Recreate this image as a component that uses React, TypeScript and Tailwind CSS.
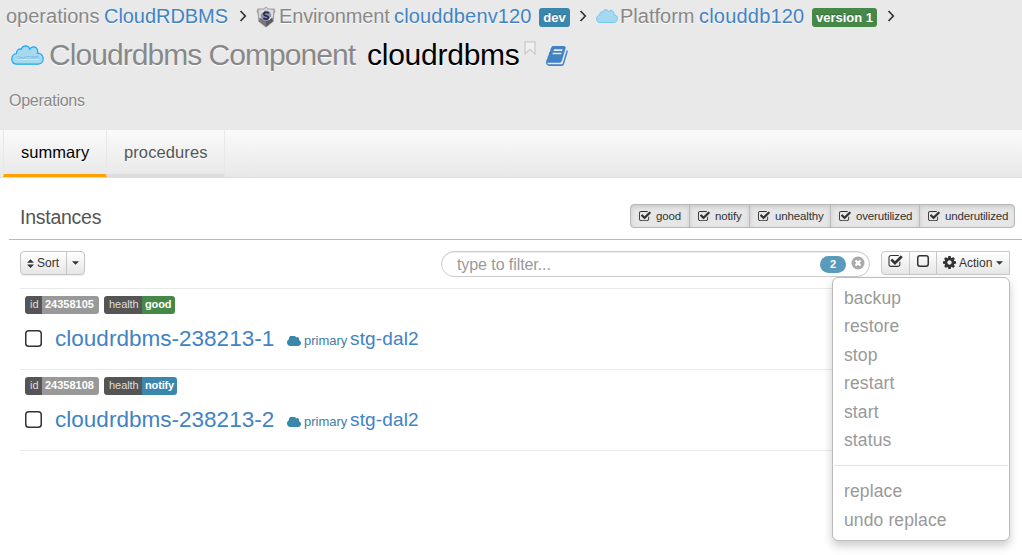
import React from "react";

type IconProps = { className?: string };

function CheckIcon({ className }: IconProps) {
  return (
    <svg viewBox="64 128 1664 1536" className={className} fill="currentColor">
      <path d="M1472 930v318q0 119-84.5 203.5t-203.5 84.5h-832q-119 0-203.5-84.5t-84.5-203.5v-832q0-119 84.5-203.5t203.5-84.5h832q63 0 117 25 15 7 18 23 3 17-9 29l-49 49q-10 10-23 10-3 0-9-2-23-6-45-6h-832q-66 0-113 47t-47 113v832q0 66 47 113t113 47h832q66 0 113-47t47-113v-254q0-13 9-22l64-64q10-10 23-10 6 0 12 3 20 8 20 29zm231-489l-814 814q-24 24-57 24t-57-24l-430-430q-24-24-24-57t24-57l110-110q24-24 57-24t57 24l263 263 647-647q24-24 57-24t57 24l110 110q24 24 24 57t-24 57z" />
    </svg>
  );
}

function CogIcon({ className }: IconProps) {
  return (
    <svg viewBox="128 128 1536 1536" className={className} fill="currentColor">
      <path d="M1152 896q0-106-75-181t-181-75-181 75-75 181 75 181 181 75 181-75 75-181zm512-109v222q0 12-8 23t-20 13l-185 28q-19 54-39 91 35 50 107 138 10 12 10 25t-9 23q-27 37-99 108t-94 71q-12 0-26-9l-138-108q-44 23-91 38-16 136-29 186-7 28-36 28h-222q-14 0-24.5-8.5t-11.5-21.5l-28-184q-49-16-90-37l-141 107q-10 9-25 9-14 0-25-11-126-114-165-168-7-10-7-23 0-12 8-23 15-21 51-66.5t54-70.5q-27-50-41-99l-183-27q-13-2-21-12.5t-8-23.5v-222q0-12 8-23t19-13l186-28q14-46 39-92-40-57-107-138-10-12-10-24 0-10 9-23 26-36 98.5-107.5t94.5-71.5q13 0 26 10l138 107q44-23 91-38 16-136 29-186 7-28 36-28h222q14 0 24.5 8.5t11.5 21.5l28 184q49 16 90 37l142-107q9-9 24-9 13 0 25 10 129 119 165 170 7 8 7 22 0 12-8 23-15 21-51 66.5t-54 70.5q26 50 41 98l183 28q13 2 21 12.5t8 23.5z" />
    </svg>
  );
}

function BookIcon({ className }: IconProps) {
  return (
    <svg viewBox="64 128 1680 1536" className={className} fill="currentColor">
      <path d="M1703 478q40 57 18 129l-275 906q-19 64-76.5 107.5t-122.5 43.5h-923q-77 0-148.5-53.5t-99.5-131.5q-24-67-2-127 0-4 3-27t4-37q1-8-3-21.5t-3-19.5q2-11 8-21t16.5-23.5 16.5-23.5q23-38 45-91.5t30-91.5q3-10 .5-30t-.5-28q3-11 17-28t17-23q21-36 42-92t25-90q1-9-2.5-32t.5-28q4-13 22-30.5t22-22.5q19-26 42.5-84.5t27.5-96.5q1-8-3-25.5t-2-26.5q2-8 9-18t18-23 17-21q8-12 16.5-30.5t15-35 16-36 19.5-32 26.5-23.5 36-11.5 47.5 5.5l-1 3q38-9 51-9h761q74 0 114 56t18 130l-274 906q-36 119-71.5 153.5t-128.5 34.5h-869q-27 0-38 15-11 16-1 43 24 70 144 70h923q29 0 56-15.5t35-41.5l300-987q7-22 5-57 38 15 59 43zm-1064 2q-4 13 2 22.5t20 9.5h608q13 0 25.5-9.5t16.5-22.5l21-64q4-13-2-22.5t-20-9.5h-608q-13 0-25.5 9.5t-16.5 22.5zm-83 256q-4 13 2 22.5t20 9.5h608q13 0 25.5-9.5t16.5-22.5l21-64q4-13-2-22.5t-20-9.5h-608q-13 0-25.5 9.5t-16.5 22.5z" />
    </svg>
  );
}

function SolidCloud({ className }: IconProps) {
  return (
    <svg viewBox="64 256 1920 1280" className={className} fill="currentColor" preserveAspectRatio="none">
      <path d="M1984 1152q0 159-112.5 271.5t-271.5 112.5h-1088q-185 0-316.5-131.5t-131.5-316.5q0-132 71-241.5t187-163.5q-2-28-2-43 0-212 150-362t362-150q158 0 286.5 88t187.5 230q70-62 166-62 106 0 181 75t75 181q0 75-41 138 129 30 213 134.5t84 239.5z" />
    </svg>
  );
}

function PlatformCloud({ className, label }: IconProps & { label?: boolean }) {
  return (
    <svg viewBox="0 0 33 20" className={className} preserveAspectRatio="none">
      <path
        d="M6 19.2C2.500 19.200.8 17 .8 14.200.8 11 3 8.800 5.600 8.500 5.100 5.500 8 3.300 10.200 4.200 11.200 1.200 14.800-.2 17.200 1.800c.9.700 1.300 1.500 1.500 2.300C20.500 1.300 24.500 1 26 3.800c.8 1.400.9 3 .4 4.400C29.800 8 32.200 10.500 32.200 13.600c0 3.300-2.200 5.600-5.400 5.600Z"
        fill="#a5d9ef"
        stroke={label ? "#14a9f5" : "#5fc3f2"}
        strokeWidth="1.200"
      />
      {label && (
        <text x="16.500" y="13.500" fontSize="3.400" textAnchor="middle" fill="#4a9fe0" fontFamily="Liberation Sans, sans-serif">
          Cloud RDBMS
        </text>
      )}
    </svg>
  );
}

function ShieldIcon({ className }: IconProps) {
  return (
    <svg viewBox="0 0 20 22" className={className}>
      <path d="M10 .5 12.500 2.600 18.500 2.500 19.500 5.500 18.300 8 17.800 15.500 10 21.500 2.200 15.500 1.700 8 .5 5.500 1.500 2.500 7.500 2.600Z" fill="#a2a2a2" />
      <path d="M10 1.600 12 3.500 17.300 3.700 16.800 13.500 10 19 3.200 13.500 2.700 3.700 8 3.500Z" fill="#dadadc" />
      <path d="M10 15v6L3 15.300 3.500 11.500Z" fill="#777" />
      <path d="M10 15v6l7-5.700L16.500 11.500Z" fill="#5c5c5e" />
      <circle cx="10" cy="9.700" r="5.200" fill="#8f95a5" />
      <path d="M12.800 7.200C11 5.600 7.600 6.300 8 8.400c.5 1.700 4.400 1.300 4.400 3.200 0 1.800-3.100 2-5 .4" fill="none" stroke="#232c55" strokeWidth="1.800" />
      <path d="M5.500 6.800 8 4.800M15 11 12.800 14" stroke="#fff" strokeWidth="1" />
    </svg>
  );
}

function Chevron({ className }: IconProps) {
  return (
    <svg viewBox="0 0 8 12" className={`h-3 w-2 shrink-0 ${className ?? ""}`} fill="none" stroke="#333" strokeWidth="1.700">
      <path d="M1.500 1 6.300 6 1.500 11" />
    </svg>
  );
}

function BoxIcon({ className, size }: IconProps & { size: number }) {
  return (
    <svg viewBox={`0 0 ${size} ${size}`} className={`shrink-0 ${className ?? ""}`} fill="none" stroke="#333" strokeWidth="1.500">
      <rect x=".75" y=".75" width={size - 1.5} height={size - 1.5} rx={size / 5.5} />
    </svg>
  );
}

const shadow = "[text-shadow:0_1px_0_#fff]";

const filters = [
  { name: "good", width: "w-[59px]" },
  { name: "notify", width: "w-[60px]" },
  { name: "unhealthy", width: "w-[81px]" },
  { name: "overutilized", width: "w-[89px]" },
  { name: "underutilized", width: "w-[96px]" },
];

const instances = [
  { name: "cloudrdbms-238213-1", id: "24358105", health: "good", color: "bg-[#468847]", width: "w-[33px]" },
  { name: "cloudrdbms-238213-2", id: "24358108", health: "notify", color: "bg-[#3a87ad]", width: "w-[35px]" },
];

const actions = ["backup", "restore", "stop", "restart", "start", "status"];
const moreActions = ["replace", "undo replace"];

function MenuItem({ label }: { label: string }) {
  return <li className="h-[28.400px] pl-[11px] text-[17.500px] leading-[29px] tracking-[0.120px] text-[#999]">{label}</li>;
}

function Header() {
  return (
    <header className="h-[130px] bg-[#e9e9e9]">
      <div className={`flex h-8 items-center pl-1.5 text-[20px] whitespace-nowrap text-[#888] ${shadow}`}>
        <span className="w-[98px]">operations</span>
        <a className="w-[135px] tracking-[-0.050px] text-[#4183c4]">CloudRDBMS</a>
        <Chevron />
        <ShieldIcon className="ml-[9px] h-[22px] w-5 shrink-0 translate-y-px" />
        <span className="ml-[3px] w-[115px] tracking-[-0.150px]">Environment</span>
        <a className="w-[145px] tracking-[0.150px] text-[#4183c4]">clouddbenv120</a>
        <span className="mt-[3px] flex h-[19px] w-[31px] items-center justify-center rounded-[3px] bg-[#3a87ad] text-[13px] font-bold text-white [text-shadow:0_-1px_0_rgba(0,0,0,.25)]">dev</span>
        <Chevron className="ml-[9px]" />
        <PlatformCloud className="ml-[9px] h-[14px] w-[22px] shrink-0" />
        <span className="ml-0.5 w-[79px]">Platform</span>
        <a className="w-[113px] tracking-[0.200px] text-[#4183c4]">clouddb120</a>
        <span className="mt-[3px] flex h-[19px] w-[65px] items-center justify-center rounded-[3px] bg-[#468847] text-[13px] font-bold text-white [text-shadow:0_-1px_0_rgba(0,0,0,.25)]">version 1</span>
        <Chevron className="ml-[10px]" />
      </div>
      <div className={`flex h-[46px] items-center pl-[11px] text-[30px] whitespace-nowrap ${shadow}`}>
        <PlatformCloud label className="h-5 w-[33px] shrink-0" />
        <h1 className="-mt-0.5 ml-[5px] w-[318px] tracking-[-0.950px] text-[#888]">Cloudrdbms Component</h1>
        <span className="-mt-0.5 w-[157px] tracking-[-0.250px] text-black">cloudrdbms</span>
        <svg viewBox="0 0 12 14" className="mb-3.5 h-[14px] w-3 shrink-0" fill="#f0f0f0" stroke="#ccc" strokeWidth="1.300">
          <path d="M1 .8H11V13L6 8.300 1 13Z" />
        </svg>
        <BookIcon className="mt-px ml-[10px] h-5 w-[22px] shrink-0 text-[#4183c4]" />
      </div>
      <div className={`pt-[13px] pl-[9px] text-[16px] leading-[20px] tracking-[-0.250px] text-[#888] ${shadow}`}>Operations</div>
    </header>
  );
}

function Tabs() {
  return (
    <nav className={`flex h-12 border-b border-[#ddd] bg-linear-to-b from-[#fafafa] to-[#e8e8e8] pl-[3px] text-[16.500px] ${shadow}`}>
      <a className="h-[47px] w-[104px] border-x border-b-3 border-x-[#e8e8e8] border-b-[#ffa200] pl-[17px] leading-[45px] tracking-[0.050px] text-black">summary</a>
      <a className="h-[47px] w-[118px] border-r border-b-3 border-r-[#e8e8e8] border-b-[#ddd] pl-[17px] leading-[45px] tracking-[0.100px] text-[#555]">procedures</a>
    </nav>
  );
}

function Toolbar() {
  return (
    <div className="flex h-12 pt-[11px] pl-[11px] text-[12px] text-[#333]">
      <div className="flex h-6 w-[65px] rounded-[4px] border border-[#c5c5c5] bg-linear-to-b from-white to-[#e6e6e6] shadow-[0_1px_1px_rgba(0,0,0,.08)]">
        <div className="flex w-[46px] items-center border-r border-[#c5c5c5] pl-1.5">
          <svg viewBox="0 0 8 10" className="h-[9px] w-[7px]" fill="#333">
            <path d="M4 0 8 4H0ZM4 10 0 6H8Z" />
          </svg>
          <span className="ml-[3px] leading-[22px]">Sort</span>
        </div>
        <svg viewBox="0 0 8 4" className="mt-[9px] ml-[5px] h-1 w-[7px]" fill="#333">
          <path d="M0 0H8L4 4Z" />
        </svg>
      </div>
      <div className="ml-[356px] flex h-[26px] w-[429px] items-center rounded-full border border-[#ccc] bg-white pl-[15px] shadow-[inset_0_1px_1px_rgba(0,0,0,.075)]">
        <span className="mt-0.5 w-[363px] text-[16px] tracking-[-0.080px] text-[#999]">type to filter...</span>
        <span className="flex h-[17px] w-[26px] items-center justify-center rounded-full bg-[#5a9aba] text-[11px] font-bold text-white">2</span>
        <svg viewBox="0 0 14 14" className="mb-0.5 ml-[5px] h-[14px] w-[14px]">
          <circle cx="7" cy="7" r="6.500" fill="#aaa" />
          <path d="m4.500 4.500 5 5m0-5-5 5" stroke="#fff" strokeWidth="2.200" />
        </svg>
      </div>
      <div className="relative ml-[11px] flex h-6 w-[129px] rounded-l-[4px] border border-[#c8c8c8] bg-linear-to-b from-white to-[#e6e6e6]">
        <div className="w-[28px] border-r border-[#c8c8c8] pt-[3px] pl-1.5">
          <CheckIcon className="h-[13px] w-[15px]" />
        </div>
        <div className="w-[27px] border-r border-[#c8c8c8] pt-[3px] pl-[7px]">
          <BoxIcon size={12} className="h-3 w-3" />
        </div>
        <div className="flex items-center pl-1.5">
          <CogIcon className="mb-0.5 h-[13px] w-[13px]" />
          <span className="ml-[3px] w-[37px] leading-[22px]">Action</span>
          <svg viewBox="0 0 8 4" className="h-1 w-[7px]" fill="#333">
            <path d="M0 0H8L4 4Z" />
          </svg>
        </div>
        <ul className="absolute top-[25px] -right-px z-10 h-[264px] w-[178px] rounded-[6px] border border-[#bbb] bg-white pt-1.5 shadow-[0_5px_10px_rgba(0,0,0,.2)]">
          {actions.map((label) => (
            <MenuItem key={label} label={label} />
          ))}
          <li className="mx-px mt-[11px] mb-[11px] h-px bg-[#e2e2e2]" />
          {moreActions.map((label) => (
            <MenuItem key={label} label={label} />
          ))}
        </ul>
      </div>
    </div>
  );
}

function Instance({ item }: { item: (typeof instances)[number] }) {
  return (
    <li className="h-[81px] border-t border-[#e9e9e9] pt-[7px] pl-[5px] whitespace-nowrap">
      <div className="flex h-[18px] text-[11px] leading-[17px]">
        <span className="w-[17px] rounded-l-[3px] bg-[#555] pl-[5px] text-[#ddd]">id</span>
        <span className="w-[57px] rounded-r-[3px] bg-[#999] pl-[3px] font-bold text-white">{item.id}</span>
        <span className="ml-[5px] w-[38px] rounded-l-[3px] bg-[#555] pl-[5px] tracking-[-0.050px] text-[#ddd]">health</span>
        <span className={`rounded-r-[3px] pl-[3px] font-bold tracking-[-0.150px] text-white ${item.color} ${item.width}`}>{item.health}</span>
      </div>
      <div className="flex h-[50px] items-center text-[#4183c4]">
        <BoxIcon size={17} className="-mt-px h-[17px] w-[17px]" />
        <a className="ml-[13px] w-[232px] text-[22.500px] tracking-[0.020px]">{item.name}</a>
        <SolidCloud className="mt-1 h-[10px] w-[14px] text-[#3a87ad]" />
        <span className="mt-1 ml-[3px] w-[46px] text-[13px] text-[#3f7da3]">primary</span>
        <a className="mt-px text-[19px] tracking-[0.150px]">stg-dal2</a>
      </div>
    </li>
  );
}

export default function App() {
  return (
    <div className="h-[555px] w-[1022px] overflow-hidden bg-white font-['Liberation_Sans',Arial,sans-serif]">
      <Header />
      <Tabs />
      <main className="pl-[9px]">
        <div className="flex h-[62px] border-b border-[#bbb] pl-[11px]">
          <h2 className="w-[610px] pt-[27px] text-[19.500px] leading-6 tracking-[-0.250px] text-[#555]">Instances</h2>
          <div className="mt-[26px] flex h-6 w-[385px] overflow-hidden rounded-[4px] border border-[#b8b8b8] bg-[#e6e6e6] text-[11.500px] tracking-[-0.150px] text-[#333]">
            {filters.map((f) => (
              <div
                key={f.name}
                className={`flex shrink-0 items-center border-r border-[#bcbcbc] pl-2 shadow-[inset_0_2px_4px_rgba(0,0,0,.12)] last:border-r-0 ${f.width}`}
              >
                <CheckIcon className="h-[11px] w-[12px]" />
                <span className="mt-px ml-[5px]">{f.name}</span>
              </div>
            ))}
          </div>
        </div>
        <Toolbar />
        <ul className="ml-[11px] w-[990px] border-b border-[#e9e9e9]">
          {instances.map((item) => (
            <Instance key={item.id} item={item} />
          ))}
        </ul>
      </main>
    </div>
  );
}
